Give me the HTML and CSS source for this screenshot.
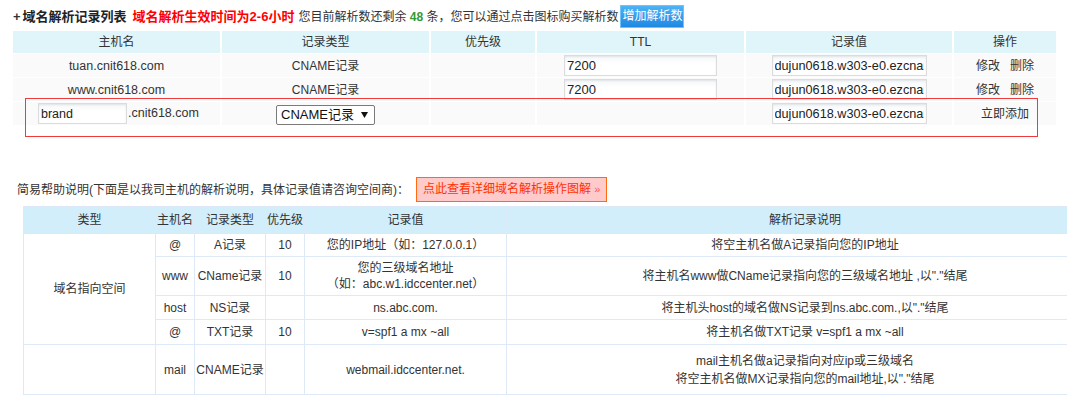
FILE: index.html
```html
<!DOCTYPE html>
<html lang="zh-CN">
<head>
<meta charset="UTF-8">
<title>域名解析记录列表</title>

<link rel="stylesheet" href="styles.css">
</head>

<body>
    <div class="top-bar">
        <b class="plus">+</b>
        <b class="title">域名解析记录列表</b>
        <b class="warn">域名解析生效时间为2-6小时</b>
        <span class="remain">您目前解析数还剩余 <b class="num">48</b> 条，您可以通过点击图标购买解析数</span>
        <a class="buy-btn" href="#">增加解析数</a>
    </div>

    <div class="records">
        <table class="rec-table">
            <colgroup>
                <col class="c-host"><col class="c-type"><col class="c-prio"><col class="c-ttl"><col class="c-val"><col class="c-op">
            </colgroup>
            <thead>
                <tr><th>主机名</th><th>记录类型</th><th>优先级</th><th>TTL</th><th>记录值</th><th>操作</th></tr>
            </thead>
            <tbody>
                <tr>
                    <td class="latin">tuan.cnit618.com</td>
                    <td>CNAME记录</td>
                    <td></td>
                    <td><input class="field ttl" type="text" value="7200"></td>
                    <td><input class="field val" type="text" value="dujun0618.w303-e0.ezcname.com"></td>
                    <td><a class="op" href="#">修改</a><a class="op" href="#">删除</a></td>
                </tr>
                <tr>
                    <td class="latin">www.cnit618.com</td>
                    <td>CNAME记录</td>
                    <td></td>
                    <td><input class="field ttl" type="text" value="7200"></td>
                    <td><input class="field val" type="text" value="dujun0618.w303-e0.ezcname.com"></td>
                    <td><a class="op" href="#">修改</a><a class="op" href="#">删除</a></td>
                </tr>
                <tr class="new-row">
                    <td class="host-cell latin"><input class="field host" type="text" value="brand">.cnit618.com</td>
                    <td>
                        <span class="select-wrap">
                            <select class="type-select">
                                <option>CNAME记录</option>
                                <option>A记录</option>
                                <option>MX记录</option>
                                <option>TXT记录</option>
                            </select>
                            <svg class="select-arrow" width="7" height="6" viewBox="0 0 7 6"><path d="M0 0H7L3.5 6Z" fill="#111"/></svg>
                        </span>
                    </td>
                    <td></td>
                    <td></td>
                    <td><input class="field val" type="text" value="dujun0618.w303-e0.ezcname.com"></td>
                    <td><a class="op" href="#">立即添加</a></td>
                </tr>
            </tbody>
        </table>
        <div class="add-frame"></div>
    </div>

    <div class="help-bar">
        <span>简易帮助说明(下面是以我司主机的解析说明，具体记录值请咨询空间商)：</span>
        <a class="guide-btn" href="#">点此查看详细域名解析操作图解 <span class="raquo">»</span></a>
    </div>

    <table class="help-table">
        <colgroup>
            <col class="h-kind"><col class="h-host"><col class="h-type"><col class="h-prio"><col class="h-val"><col class="h-desc">
        </colgroup>
        <thead>
            <tr><th>类型</th><th>主机名</th><th>记录类型</th><th>优先级</th><th>记录值</th><th>解析记录说明</th></tr>
        </thead>
        <tbody>
            <tr class="r1">
                <td rowspan="4">域名指向空间</td>
                <td>@</td>
                <td>A记录</td>
                <td>10</td>
                <td>您的IP地址（如：127.0.0.1）</td>
                <td>将空主机名做A记录指向您的IP地址</td>
            </tr>
            <tr class="r2">
                <td>www</td>
                <td>CName记录</td>
                <td>10</td>
                <td>您的三级域名地址<br>（如：abc.w1.idccenter.net）</td>
                <td>将主机名www做CName记录指向您的三级域名地址 ,以"."结尾</td>
            </tr>
            <tr class="r3">
                <td>host</td>
                <td>NS记录</td>
                <td></td>
                <td>ns.abc.com.</td>
                <td>将主机头host的域名做NS记录到ns.abc.com.,以"."结尾</td>
            </tr>
            <tr class="r4">
                <td>@</td>
                <td>TXT记录</td>
                <td>10</td>
                <td>v=spf1 a mx ~all</td>
                <td>将主机名做TXT记录 v=spf1 a mx ~all</td>
            </tr>
            <tr class="r5">
                <td></td>
                <td>mail</td>
                <td>CNAME记录</td>
                <td></td>
                <td>webmail.idccenter.net.</td>
                <td class="two-lines">mail主机名做a记录指向对应ip或三级域名<br>将空主机名做MX记录指向您的mail地址,以"."结尾</td>
            </tr>
        </tbody>
    </table>
</body>
</html>
```

FILE: styles.css
```css
html, body {
    overflow: hidden;
}

body {
    margin: 0;
    background: #fff;
    color: #333;
    font-family: "Liberation Sans", "Noto Sans CJK SC", sans-serif;
    font-size: 12px;
    line-height: 16px;
}

a {
    color: #333;
    text-decoration: none;
}

/* title line */
.top-bar {
    display: flex;
    align-items: center;
    height: 23px;
    padding: 5px 0 0 13px;
    white-space: nowrap;
}

.plus {
    font-size: 13px;
    margin-right: 2px;
}

.title {
    font-size: 13px;
    color: #222;
}

.warn {
    font-size: 13px;
    color: #f00;
    margin-left: 6px;
}

.remain {
    margin-left: 4px;
}

.num {
    color: #393;
}

.buy-btn {
    margin-left: 2px;
    height: 21px;
    line-height: 21px;
    padding: 0 1px;
    color: #fff;
    font-size: 12px;
    background: linear-gradient(#4db2f6, #1f88e2);
    border: 1px solid #72c2f5;
}

/* record list */
.records {
    position: relative;
    margin: 2px 0 0 11px;
    width: 1047px;
}

.rec-table {
    table-layout: fixed;
    width: 1047px;
    border-collapse: separate;
    border-spacing: 2px 1px;
}

.c-host { width: 207px; }
.c-type { width: 207px; }
.c-prio { width: 104px; }
.c-ttl  { width: 207px; }
.c-val  { width: 206px; }
.c-op   { width: 102px; }

.rec-table th {
    height: 22px;
    padding: 0;
    background: #dff5fa;
    font-weight: normal;
}

.rec-table td {
    height: 23px;
    padding: 0;
    background: #fafafa;
    text-align: center;
    white-space: nowrap;
}

.rec-table .latin {
    font-size: 12.5px;
}

.field {
    box-sizing: border-box;
    height: 21px;
    padding: 0 2px;
    border: 1px solid #dcdcdc;
    background: linear-gradient(#f4f7fa, #fff 40%);
    box-shadow: inset 0 1px 2px rgba(0, 0, 0, 0.08);
    font-family: "Liberation Sans", sans-serif;
    font-size: 13px;
    color: #222;
    vertical-align: middle;
}

.ttl {
    width: 153px;
}

.val {
    width: 155px;
    font-size: 12.7px;
}

.op + .op {
    margin-left: 10px;
}

.rec-table .host-cell {
    text-align: left;
    padding-left: 25px;
}

.host {
    width: 89px;
    margin-right: 1px;
    font-size: 12.5px;
}

.select-wrap {
    position: relative;
    display: inline-block;
    vertical-align: middle;
    line-height: 0;
    margin-top: 2px;
}

.type-select {
    appearance: none;
    -webkit-appearance: none;
    width: 99px;
    height: 20px;
    padding: 0 0 0 4px;
    border: 1px solid #7a7a7a;
    border-radius: 2px;
    background: #fff;
    color: #111;
    font-family: "Liberation Sans", "Noto Sans CJK SC", sans-serif;
    font-size: 13px;
}

.select-arrow {
    position: absolute;
    right: 7px;
    top: 7px;
    pointer-events: none;
}

.add-frame {
    position: absolute;
    left: 14px;
    top: 68px;
    width: 1013px;
    height: 39px;
    box-sizing: border-box;
    border: 1px solid #ef3b3b;
    pointer-events: none;
}

/* help */
.help-bar {
    display: flex;
    align-items: center;
    height: 25px;
    margin-top: 51px;
    padding-left: 17px;
    white-space: nowrap;
}

.guide-btn {
    margin-left: 7px;
    height: 23px;
    line-height: 23px;
    padding: 0 6px;
    background: #ffcaca;
    border: 1px solid #ff6a13;
    color: #f30;
}

.raquo {
    font-size: 11px;
    color: #f55;
}

.help-table {
    table-layout: fixed;
    width: 1080px;
    margin: 4px 0 0 23px;
    border-collapse: collapse;
}

.h-kind { width: 132px; }
.h-host { width: 39px; }
.h-type { width: 71px; }
.h-prio { width: 39px; }
.h-val  { width: 202px; }
.h-desc { width: 597px; }

.help-table th,
.help-table td {
    padding: 0;
    border: 1px solid #dde9f7;
    text-align: center;
    white-space: nowrap;
}

.help-table th {
    height: 26px;
    background: #d2eefb;
    font-weight: normal;
}

.help-table .r1 td { height: 22px; }
.help-table .r2 td { height: 38px; }
.help-table .r3 td { height: 23px; }
.help-table .r4 td { height: 24px; }
.help-table .r5 td { height: 49px; }

.help-table .two-lines {
    line-height: 18px;
}
```
